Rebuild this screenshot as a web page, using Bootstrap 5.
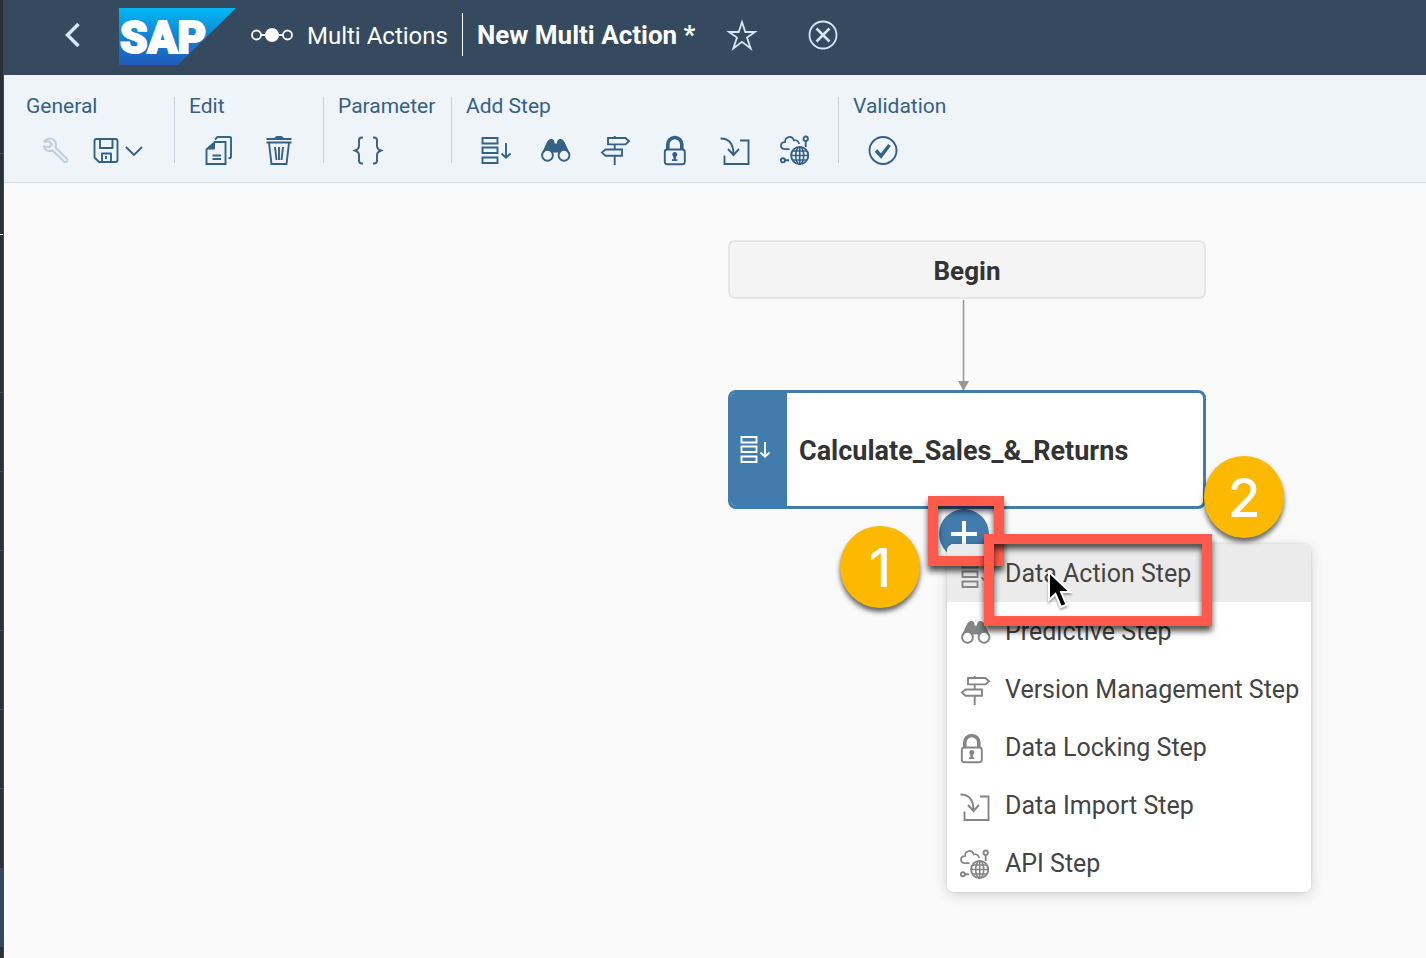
<!DOCTYPE html>
<html lang="en">
<head>
<meta charset="utf-8">
<meta name="viewport" content="width=device-width, initial-scale=1">
<title>New Multi Action</title>
<link href="https://cdn.jsdelivr.net/npm/bootstrap@5.3.0/dist/css/bootstrap.min.css" rel="stylesheet">
<style>
  body { font-family: Roboto, "Liberation Sans", sans-serif; background: #fafafa; }
  button { font-family: inherit; }
  .side-rail { width: 4px; background: #293038; border-right: 1px solid #3f464e; }
  .side-rail .tick { height: 1px; background: #474e56; }
  .side-rail .tick-light { height: 1px; background: #fff; }
  .side-rail .rail-current { height: 79px; background: #354a5f; margin-bottom: 11px; }
  .shell { height: 75px; padding-bottom: 6px; background: #354a5f; color: #fff; }
  .shell .btn { color: #d1e8ff; --bs-btn-hover-color: #fff; }
  .shell-link { color: #fff; text-decoration: none; margin-left: 15px; gap: 14px; font-size: 24px; }
  .shell-link span, .shell-title { padding-top: 2px; }
  .shell-title { font-size: 26px; }
  .back-btn { width: 40px; margin-left: 48px; }
  .logo { margin-left: 27px; margin-top: 4px; }
  .title-rule { width: 1px; height: 43px; background: #fff; margin: 0 14px; }
  .fav-btn { margin-left: 30px; }
  .close-btn { margin-left: 47px; }
  .tools { background: #eff4f9; border-bottom: 1px solid #cfdded; color: #346187; padding: 22px 0 19px; --icon-bg: #eff4f9; }
  .tool-group { padding-left: 14px; border-right: 1px solid #c8d1da; height: 66px; }
  .tool-group.w-general { width: 171px; padding-left: 22px; }
  .tool-group.w-edit { width: 149px; }
  .tool-group.w-param { width: 128px; }
  .tool-group.w-add { width: 387px; }
  .tool-group:last-child { border-right: 0; }
  .tool-label { font-size: 21px; line-height: 18px; color: #346187; margin: 0 0 20px; font-weight: 400; }
  .tool-btn { width: 60px; height: 32px; color: #346187; --bs-btn-disabled-opacity: .25; --bs-btn-disabled-color: #346187; --bs-btn-hover-color: #1b4468; }
  .board { min-height: 775px; }
  .node-begin { left: 724px; top: 57px; width: 478px; height: 59px; background: #f4f4f4; border: 2px solid #e6e6e6; border-radius: 7px; font-size: 26px; color: #333; }
  .node-link { left: 952px; top: 117px; }
  .node-step { left: 724px; top: 207px; width: 478px; height: 119px; border: 3px solid #427cac; border-radius: 8px; background: #fff; overflow: hidden; font-size: 27px; color: #333; }
  .node-kind { width: 56px; background: #427cac; color: #fff; }
  .add-btn { left: 935px; top: 326px; width: 50px; height: 50px; background: #427cac; color: #fff; --bs-btn-hover-color: #fff; --bs-btn-hover-bg: #427cac; }
  .step-menu { left: 943px; top: 361px; width: 364px; background: #fff; border-radius: 7px; overflow: hidden; --icon-bg: #fff; }
  .menu-shadow { box-shadow: 0 3px 14px rgba(0,0,0,.16), 0 0 3px rgba(0,0,0,.12); }
  .menu-row { height: 58px; padding: 4px 13px 0; gap: 13px; border: 0; background: #fff; color: #858585; }
  .menu-row span { color: #444; font-size: 25px; line-height: 30px; margin-bottom: 3px; }
  .menu-row.current { background: #ebebeb; --icon-bg: #ebebeb; }
  .frame { border: 10px solid #ff5a4c; filter: drop-shadow(0 5px 3px rgba(0,0,0,.7)); pointer-events: none; }
  .frame-add { left: 924px; top: 313px; width: 76px; height: 70px; }
  .frame-item { left: 980px; top: 351px; width: 228px; height: 92px; }
  .callout { width: 80px; height: 82px; border-radius: 50%; background: #fcb900; color: #fff; font: 500 53px/84px Inter, "Liberation Sans", sans-serif; text-align: center; box-shadow: 0 4px 5px rgba(0,0,0,.6); }
  .callout-1 { left: 836px; top: 343px; }
  .callout-2 { left: 1200px; top: 273px; }
  .pointer { left: 1042px; top: 387px; filter: drop-shadow(0 2px 1px rgba(0,0,0,.35)); pointer-events: none; }
  svg { display: block; flex: none; }
  .line { fill: none; stroke: currentColor; stroke-width: 1.9; }
  .menu-row .line, .node-kind .line { stroke-width: 2.2; }
</style>
</head>
<body>
<svg class="d-none" aria-hidden="true">
  <symbol id="i-action" viewBox="0 0 32 32"><g class="line"><path d="M2.500 3h15v5.500h-15zM2.500 12.500h15V18h-15zM2.500 22.500h15V28h-15z"/><path d="M26 8v14.500M21.500 18.500l4.500 4.300 4.500-4.300"/></g></symbol>
  <symbol id="i-binoc" viewBox="0 0 32 32"><path fill="currentColor" d="M1.500 19 7 7Q8.500 4 11 4H12Q14.500 4.500 14.500 7v1.500h2.500V7Q17.500 4.500 19.500 4h1.200Q23 4 24.500 7l5.500 12-6 3-6-4.500h-4.500L8 22z"/><g class="line" style="fill:var(--icon-bg)"><circle cx="7.500" cy="20.300" r="5.400"/><circle cx="24" cy="20.300" r="5.400"/></g></symbol>
  <symbol id="i-sign" viewBox="0 0 32 32"><g class="line"><path d="M14.700 1v2M14.700 9.500v5M14.700 20.800V30M8 3h17.500l3.500 3.200-3.500 3.200H8zM22 14.500H5.500L2 17.600l3.500 3.200H22z"/></g></symbol>
  <symbol id="i-lock" viewBox="0 0 32 32"><g class="line"><rect x="4.800" y="14.500" width="20" height="14.700" rx="2.500"/><path style="stroke-width:3.600" d="M7.800 14.500V9.500a7 7 0 0 1 14 0v5"/></g><path fill="currentColor" d="M12.300 19.500a2.500 2.500 0 1 1 4 2l-.5 2.700h1.500v1.800h-5.300v-1.800h1.500l-.2-2.700a2.500 2.500 0 0 1-1-2z"/></symbol>
  <symbol id="i-import" viewBox="0 0 32 32"><g class="line"><path d="M.5 3.500C8 3.500 13.500 8 13.500 19.500M8 14l5.500 6 5.500-6M20 5.500h8.500V29h-24v-8.500"/></g></symbol>
  <symbol id="i-api" viewBox="0 0 32 32"><g class="line"><path style="stroke-width:1.700" d="M9.500 14.200H4.500C-.5 13.500 0 7 5 7.200 5 1 12 .2 14 5.500 17 4.500 19 6.800 19 9M12.500 16h14.500M11 20.500h17.500M12.500 25h14.500M19.700 12v17"/><circle cx="19.700" cy="20.500" r="8.600"/><ellipse cx="19.700" cy="20.500" rx="4" ry="8.600" style="stroke-width:1.600"/><path d="M25.700 6v6M5 25.300h4"/><circle cx="25.700" cy="3.700" r="2.200"/><circle cx="2.900" cy="25.300" r="2.100"/></g></symbol>
</svg>

<div class="d-flex min-vh-100">
  <div class="side-rail d-flex flex-column flex-shrink-0" aria-hidden="true">
    <div class="tick" style="margin-top:153px"></div>
    <div class="tick-light" style="margin-top:80px"></div>
    <div class="tick" style="margin-top:157px"></div>
    <div class="tick" style="margin-top:78px"></div>
    <div class="tick" style="margin-top:78px"></div>
    <div class="tick" style="margin-top:79px"></div>
    <div class="tick" style="margin-top:78px"></div>
    <div class="tick" style="margin-top:78px"></div>
    <div class="rail-current mt-auto"></div>
  </div>

  <div class="flex-grow-1">
    <header class="shell d-flex align-items-center">
      <button class="btn p-0 back-btn d-flex justify-content-center" type="button" aria-label="Back"><svg width="24" height="28" viewBox="0 0 24 28"><path d="M18.500 3 7.500 14l11 11" fill="none" stroke="currentColor" stroke-width="3.500"/></svg></button>
      <svg class="logo" width="117" height="57" viewBox="0 0 117 57" role="img" aria-label="SAP">
        <defs><linearGradient id="sky" x2="0" y2="1"><stop stop-color="#00b9f2"/><stop offset=".5" stop-color="#1482d2"/><stop offset="1" stop-color="#1f5bbb"/></linearGradient></defs>
        <path fill="url(#sky)" d="M0 0h117L59 57H0z"/>
        <text x="1" y="45" fill="#fff" stroke="#fff" stroke-width="2" font-family="Roboto" font-weight="900" font-size="44">SAP</text>
      </svg>
      <a class="shell-link d-flex align-items-center" href="#">
        <svg width="42" height="18" viewBox="0 0 42 18"><g fill="none" stroke="#fff" stroke-width="1.800"><circle cx="5.500" cy="9" r="4.500"/><circle cx="36.500" cy="9" r="4.500"/><path d="M10 9h22"/></g><circle cx="21" cy="9" r="7" fill="#fff"/></svg>
        <span>Multi Actions</span>
      </a>
      <div class="title-rule"></div>
      <span class="shell-title fw-bold text-nowrap">New Multi Action *</span>
      <button class="btn p-0 fav-btn" type="button" aria-label="Favourite"><svg width="32" height="32" viewBox="0 0 32 32"><path d="m16 3 3.300 10H29l-8 5.600L24.700 29.500 16 22.800 7.300 29.500 11 18.600 3 13h9.700z" fill="none" stroke="currentColor" stroke-width="1.800"/></svg></button>
      <button class="btn p-0 close-btn" type="button" aria-label="Close"><svg width="32" height="32" viewBox="0 0 32 32"><g fill="none" stroke="currentColor"><circle cx="16" cy="16" r="13.500" stroke-width="1.800"/><path d="m9.500 9.500 13 13m0-13-13 13" stroke-width="2.600"/></g></svg></button>
    </header>

    <div class="tools d-flex" role="toolbar" aria-label="Multi action tools">
      <div class="tool-group w-general">
        <h2 class="tool-label">General</h2>
        <div class="d-flex">
          <button class="btn tool-btn p-0 border-0 d-flex justify-content-center" type="button" disabled aria-label="Settings"><svg width="32" height="32"><path fill="none" stroke="currentColor" stroke-width="2" stroke-linejoin="round" d="M4 6.500Q9 1.500 14 5 17 8 15.500 12.500L27 24q.8 1.500-.3 2.500t-2.500.3L12.500 15.500Q8 17 5 14L3.800 11.500 9.500 12 12 9.500 9 6.500z"/></svg></button>
          <button class="btn tool-btn p-0 border-0 d-flex justify-content-center align-items-center gap-1" type="button" aria-label="Save"><svg width="32" height="32"><g class="line" stroke-linejoin="round"><path d="M7.500 4h19q2 0 2 2v19q0 2-2 2H10l-4.500-4.500V6q0-2 2-2zM11 4v9h12.500V4M13 27v-8.500h9V27M17 21v3"/></g></svg><svg width="18" height="12"><path class="line" d="m1 2 8 8 8-8"/></svg></button>
        </div>
      </div>
      <div class="tool-group w-edit">
        <h2 class="tool-label">Edit</h2>
        <div class="d-flex">
          <button class="btn tool-btn p-0 border-0 d-flex justify-content-center" type="button" aria-label="Copy"><svg width="32" height="32"><g class="line"><path d="M12 7h10.500v22h-19V14.500zM9.500 20.500h8.500M9.500 24h8.500M12 4.500l2.500-2.500h12.500q1 0 1 1v19q0 1-1 1h-1.500"/></g><path fill="currentColor" d="M3.500 14.500 12 6.500v7q0 1-1 1z"/></svg></button>
          <button class="btn tool-btn p-0 border-0 d-flex justify-content-center" type="button" aria-label="Delete"><svg width="32" height="32"><g class="line"><path d="M3.500 4h25M3.500 7.500h25"/><path d="m6 8 2.500 21h15L26 8M12 12l1.500 13M16 12v13M20 12l-1.500 13"/></g><path fill="currentColor" d="M11 3.500q1-2.500 3-2.500h4q2 0 3 2.500z"/></svg></button>
        </div>
      </div>
      <div class="tool-group w-param">
        <h2 class="tool-label">Parameter</h2>
        <div class="d-flex">
          <button class="btn tool-btn p-0 border-0 d-flex justify-content-center" type="button" aria-label="Parameters"><svg width="32" height="32"><path class="line" d="M11 2.500H10Q7 2.500 7 5.500V11q0 3-4 4.500Q7 17 7 20v5.500q0 3 3 3h1M21 2.500h1q3 0 3 3V11q0 3 4 4.500-4 1.500-4 4.500v5.500q0 3-3 3h-1"/></svg></button>
        </div>
      </div>
      <div class="tool-group w-add">
        <h2 class="tool-label">Add Step</h2>
        <div class="d-flex">
          <button class="btn tool-btn p-0 border-0 d-flex justify-content-center" type="button" aria-label="Data Action Step"><svg width="32" height="32"><use href="#i-action"/></svg></button>
          <button class="btn tool-btn p-0 border-0 d-flex justify-content-center" type="button" aria-label="Predictive Step"><svg width="32" height="32"><use href="#i-binoc"/></svg></button>
          <button class="btn tool-btn p-0 border-0 d-flex justify-content-center" type="button" aria-label="Version Management Step"><svg width="32" height="32"><use href="#i-sign"/></svg></button>
          <button class="btn tool-btn p-0 border-0 d-flex justify-content-center" type="button" aria-label="Data Locking Step"><svg width="32" height="32"><use href="#i-lock"/></svg></button>
          <button class="btn tool-btn p-0 border-0 d-flex justify-content-center" type="button" aria-label="Data Import Step"><svg width="32" height="32"><use href="#i-import"/></svg></button>
          <button class="btn tool-btn p-0 border-0 d-flex justify-content-center" type="button" aria-label="API Step"><svg width="32" height="32"><use href="#i-api"/></svg></button>
        </div>
      </div>
      <div class="tool-group">
        <h2 class="tool-label">Validation</h2>
        <div class="d-flex">
          <button class="btn tool-btn p-0 border-0 d-flex justify-content-center" type="button" aria-label="Validate"><svg width="32" height="32"><circle class="line" cx="16" cy="15.500" r="13.500"/><path d="m9 15.500 5 5.500 8.500-11" fill="none" stroke="currentColor" stroke-width="3.400"/></svg></button>
        </div>
      </div>
    </div>

    <main class="board position-relative">
      <div class="node-begin position-absolute d-flex align-items-center justify-content-center fw-bold pt-1">Begin</div>
      <svg class="node-link position-absolute" width="16" height="91" aria-hidden="true"><path d="M7.500 0v84" stroke="#999" stroke-width="1.600"/><path d="M2 81h11l-5.500 10z" fill="#999"/></svg>
      <div class="node-step position-absolute d-flex">
        <div class="node-kind d-flex align-items-center ps-2"><svg width="32" height="32"><use href="#i-action"/></svg></div>
        <div class="d-flex align-items-center fw-bold ps-2 ms-1 pt-1">Calculate_Sales_&amp;_Returns</div>
      </div>
      <button class="add-btn btn rounded-circle position-absolute p-0 border-0 d-flex align-items-center justify-content-center" type="button" aria-label="Add step"><svg width="28" height="28"><path d="M14 1v26M1 14h26" stroke="currentColor" stroke-width="4"/></svg></button>

      <div class="step-menu menu-shadow position-absolute" role="menu">
        <button class="menu-row current w-100 d-flex align-items-center" role="menuitem" type="button"><svg width="32" height="32"><use href="#i-action"/></svg><span>Data Action Step</span></button>
        <button class="menu-row w-100 d-flex align-items-center" role="menuitem" type="button"><svg width="32" height="32"><use href="#i-binoc"/></svg><span>Predictive Step</span></button>
        <button class="menu-row w-100 d-flex align-items-center" role="menuitem" type="button"><svg width="32" height="32"><use href="#i-sign"/></svg><span class="text-nowrap">Version Management Step</span></button>
        <button class="menu-row w-100 d-flex align-items-center" role="menuitem" type="button"><svg width="32" height="32" viewBox="3 0 32 32"><use href="#i-lock" width="32" height="32"/></svg><span>Data Locking Step</span></button>
        <button class="menu-row w-100 d-flex align-items-center" role="menuitem" type="button"><svg width="32" height="32"><use href="#i-import"/></svg><span>Data Import Step</span></button>
        <button class="menu-row w-100 d-flex align-items-center" role="menuitem" type="button"><svg width="32" height="32"><use href="#i-api"/></svg><span>API Step</span></button>
      </div>

      <div class="frame frame-add position-absolute"></div>
      <div class="frame frame-item position-absolute"></div>
      <div class="callout callout-1 position-absolute">1</div>
      <div class="callout callout-2 position-absolute">2</div>
      <svg class="pointer position-absolute" width="28" height="42" aria-hidden="true"><path d="M3 2v28l6.500-6 5.500 13 5.500-2.300L15 22h9z" fill="#000" stroke="#fff" stroke-width="2"/></svg>
    </main>
  </div>
</div>
<script src="https://cdn.jsdelivr.net/npm/bootstrap@5.3.0/dist/js/bootstrap.bundle.min.js"></script>
</body>
</html>
